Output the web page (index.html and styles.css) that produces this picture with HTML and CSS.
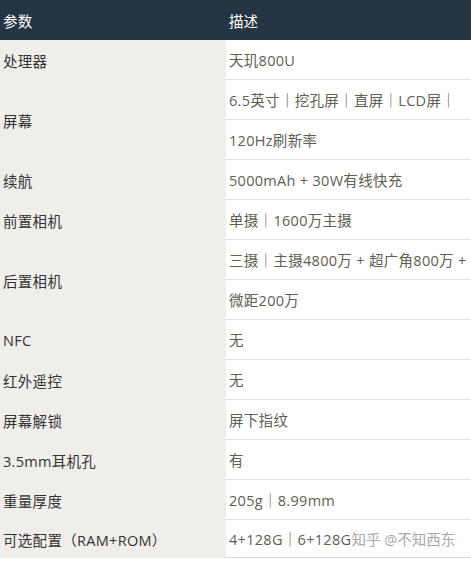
FILE: index.html
```html
<!DOCTYPE html>
<html lang="zh-CN">
<head>
    <meta charset="UTF-8">
    <meta name="viewport" content="width=device-width, initial-scale=1.0">
    <title>参数</title>
    <link rel="stylesheet" href="styles.css">
</head>
<body>
    <div class="spec-table">
        <div class="head key">参数</div>
        <div class="head val">描述</div>

        <div class="key">处理器</div>
        <div class="val"><div class="line">天玑800U</div></div>

        <div class="key">屏幕</div>
        <div class="val">
            <div class="line">6.5英寸｜挖孔屏｜直屏｜LCD屏｜</div>
            <div class="line">120Hz刷新率</div>
        </div>

        <div class="key">续航</div>
        <div class="val"><div class="line">5000mAh + 30W有线快充</div></div>

        <div class="key">前置相机</div>
        <div class="val"><div class="line">单摄｜1600万主摄</div></div>

        <div class="key">后置相机</div>
        <div class="val">
            <div class="line">三摄｜主摄4800万 + 超广角800万 +</div>
            <div class="line">微距200万</div>
        </div>

        <div class="key">NFC</div>
        <div class="val"><div class="line">无</div></div>

        <div class="key">红外遥控</div>
        <div class="val"><div class="line">无</div></div>

        <div class="key">屏幕解锁</div>
        <div class="val"><div class="line">屏下指纹</div></div>

        <div class="key">3.5mm耳机孔</div>
        <div class="val"><div class="line">有</div></div>

        <div class="key">重量厚度</div>
        <div class="val"><div class="line">205g｜8.99mm</div></div>

        <div class="key">可选配置（RAM+ROM）</div>
        <div class="val"><div class="line last">4+128G｜6+128G<span class="mark">知乎 @不知西东</span></div></div>
    </div>
</body>
</html>
```

FILE: styles.css
```css
body {
    margin: 0;
    background-color: #ffffff;
    font-family: "Open Sans", "Noto Sans CJK SC", sans-serif;
    font-size: 14.5px;
}
.spec-table {
    display: grid;
    grid-template-columns: 226px 1fr;
    width: 471px;
}
.key {
    background-color: #f0eeeb;
    color: #333333;
    padding-left: 3px;
    display: flex;
    align-items: center;
    letter-spacing: 0.3px;
}
.val {
    background-color: #ffffff;
    color: #606052;
}
.head {
    background-color: #253443;
    color: #ffffff;
    height: 40px;
    display: flex;
    align-items: center;
}
.head.val {
    padding-left: 3px;
}
.line {
    height: 39px;
    border-bottom: 1px solid #e3e3e3;
    padding-left: 3px;
    display: flex;
    align-items: center;
    white-space: nowrap;
    letter-spacing: 0.3px;
}
.line.last {
    height: 37px;
    border-bottom-color: #d6d6d6;
}
.mark {
    color: #a8a8a8;
    letter-spacing: 0;
}
```
